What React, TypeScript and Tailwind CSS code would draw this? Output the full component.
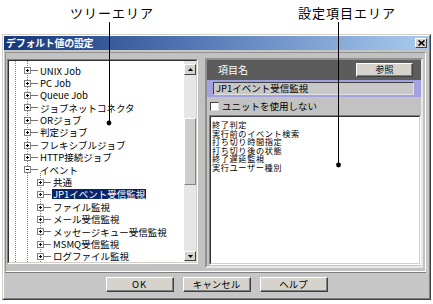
import React from "react";

const ROW = 12.4;
const TOP = 3.5;

type Item = { t: string; l: number; open?: boolean; sel?: boolean };
const items: Item[] = [
  { t: "UNIX Job", l: 1 },
  { t: "PC Job", l: 1 },
  { t: "Queue Job", l: 1 },
  { t: "ジョブネットコネクタ", l: 1 },
  { t: "ORジョブ", l: 1 },
  { t: "判定ジョブ", l: 1 },
  { t: "フレキシブルジョブ", l: 1 },
  { t: "HTTP接続ジョブ", l: 1 },
  { t: "イベント", l: 1, open: true },
  { t: "共通", l: 2 },
  { t: "JP1イベント受信監視", l: 2, sel: true },
  { t: "ファイル監視", l: 2 },
  { t: "メール受信監視", l: 2 },
  { t: "メッセージキュー受信監視", l: 2 },
  { t: "MSMQ受信監視", l: 2 },
  { t: "ログファイル監視", l: 2 },
];

const listItems = [
  "終了判定",
  "実行前のイベント検索",
  "打ち切り時間指定",
  "打ち切り後の状態",
  "終了遅延監視",
  "実行ユーザー種別",
];

function TreeLines() {
  const H = 201;
  const rowY = (i: number) => Math.floor(TOP + ROW * i + ROW / 2);
  const evIdx = 8;
  return (
    <svg className="absolute inset-0 pointer-events-none" width={175} height={H}>
      <line x1={6.5} y1={0} x2={6.5} y2={H} stroke="#808080" strokeDasharray="1 1" />
      <line x1={18.5} y1={0} x2={18.5} y2={H} stroke="#808080" strokeDasharray="1 1" />
      <line x1={31.5} y1={rowY(evIdx) + 4} x2={31.5} y2={H} stroke="#808080" strokeDasharray="1 1" />
      {items.map((it, i) => {
        const r = rowY(i);
        const cx = it.l === 1 ? 18 : 31;
        return (
          <g key={i}>
            <line x1={cx + 4} y1={r + 0.5} x2={cx + 11} y2={r + 0.5} stroke="#707070" />
            <rect x={cx - 2.5} y={r - 2.5} width={6} height={6} fill="#fff" stroke="#808080" />
            <line x1={cx - 1} y1={r + 0.5} x2={cx + 2} y2={r + 0.5} stroke="#000" />
            {!it.open && (
              <line x1={cx + 0.5} y1={r - 1} x2={cx + 0.5} y2={r + 2} stroke="#000" />
            )}
          </g>
        );
      })}
    </svg>
  );
}

function WinButton({ children, className = "" }: { children: React.ReactNode; className?: string }) {
  return (
    <div
      className={
        "flex items-center justify-center bg-[#d6d3cc] border border-t-white border-l-white border-r-[#404040] border-b-[#404040] shadow-[inset_-1px_-1px_0_#808080] " +
        className
      }
    >
      {children}
    </div>
  );
}

export default function App() {
  return (
    <div className="relative w-[433px] h-[304px] bg-white overflow-hidden font-['Noto_Sans_CJK_JP',sans-serif] text-black">
      {/* annotation labels */}
      <div className="flex h-[34px] items-start pt-[5px] text-[13px] leading-[16px] tracking-[1px]">
        <div className="ml-[70px] w-[228px]">ツリーエリア</div>
        <div>設定項目エリア</div>
      </div>

      {/* dialog */}
      <div className="ml-[2px] w-[429px] h-[266px] border border-t-[#d4d0c8] border-l-[#d4d0c8] border-r-[#404040] border-b-[#404040]">
        <div className="h-full flex flex-col border border-t-white border-l-white border-r-[#808080] border-b-[#808080] bg-[#c6c6c6]">
          {/* title bar */}
          <div className="h-[14px] flex items-center justify-between bg-gradient-to-r from-[#16377a] via-[#5d80bb] to-[#aacbef] pl-[2px] pr-[2px]">
            <span className="text-white font-bold text-[10px] leading-[14px] tracking-[-0.3px]">デフォルト値の設定</span>
            <div className="w-[12px] h-[10px] bg-[#d6d3cc] border border-t-white border-l-white border-r-[#404040] border-b-[#404040] flex items-center justify-center">
              <svg width="7" height="6" viewBox="0 0 7 6">
                <path d="M0.5 0.5 L6.5 5.5 M6.5 0.5 L0.5 5.5" stroke="#000" strokeWidth="1.6" />
              </svg>
            </div>
          </div>

          {/* main panel */}
          <div className="mt-[2px] ml-[1px] w-[421px] h-[220px] border border-t-[#909090] border-l-[#909090] border-r-white border-b-white shadow-[0_1px_0_#808080] bg-[#c2c2c2] flex">
            {/* tree box */}
            <div className="ml-[1px] mt-[6px] w-[191px] h-[205px] border border-t-[#808080] border-l-[#808080] border-r-white border-b-white">
              <div className="w-full h-full flex border border-t-[#303030] border-l-[#303030] border-r-[#d4d0c8] border-b-[#d4d0c8]">
                <div className="relative w-[175px] h-full bg-white overflow-hidden pt-[3.5px] text-[9.5px]">
                  <TreeLines />
                  {items.map((it, i) => (
                    <div
                      key={i}
                      className={"relative h-[12.4px] leading-[12.4px] whitespace-nowrap " + (it.l === 1 ? "pl-[31px]" : "pl-[43px]")}
                    >
                      {it.sel ? (
                        <span className="bg-[#0a246a] text-white px-[1px] inline-block leading-[10px]">{it.t}</span>
                      ) : (
                        <span className={it.l === 2 ? "pl-[1px]" : ""}>{it.t}</span>
                      )}
                    </div>
                  ))}
                </div>
                {/* scrollbar */}
                <div className="w-[12px] h-full flex flex-col bg-[#e6e6e6]">
                  <div className="h-[3px]" />
                  <div className="h-[11px] flex items-center justify-center bg-[#d6d3cc] border border-t-white border-l-white border-r-[#404040] border-b-[#404040]">
                    <svg width="5" height="3" viewBox="0 0 5 3"><path d="M2.5 0 L5 3 L0 3 Z" fill="#000" /></svg>
                  </div>
                  <div className="h-[43px]" />
                  <div className="h-[67px] bg-[#cfcccc] border border-t-white border-l-white border-r-[#808080] border-b-[#808080]" />
                  <div className="flex-1" />
                  <div className="h-[10px] mb-[1px] flex items-center justify-center bg-[#d6d3cc] border border-t-white border-l-white border-r-[#404040] border-b-[#404040]">
                    <svg width="5" height="3" viewBox="0 0 5 3"><path d="M0 0 L5 0 L2.5 3 Z" fill="#000" /></svg>
                  </div>
                </div>
              </div>
            </div>

            {/* right panel */}
            <div className="ml-[7px] mt-[5px] w-[218px] h-[210px] border-2 border-t-[#909090] border-l-[#909090] border-r-[#e8e8e8] border-b-[#e8e8e8] flex flex-col">
              <div className="h-[20px] bg-[#5c5c5c] flex items-center justify-between pl-[11px] pr-[8px]">
                <span className="text-white text-[10px] leading-[12px]">項目名</span>
                <WinButton className="w-[57px] h-[14px] text-[9px] leading-[10px]">参照</WinButton>
              </div>
              <div className="h-[17px] bg-[#a2a2e0] pl-[6px] pr-[7px] flex items-center">
                <div className="w-full h-[13px] bg-[#c8c8c8] border border-t-[#404040] border-l-[#404040] border-r-[#e0e0e0] border-b-[#e0e0e0] pl-[2px] text-[9.5px] leading-[11px] whitespace-nowrap">
                  JP1イベント受信監視
                </div>
              </div>
              <div className="h-[18px] flex items-center pl-[3px]">
                <div className="w-[9px] h-[9px] bg-white border border-t-[#404040] border-l-[#404040] border-r-[#e0e0e0] border-b-[#e0e0e0]" />
                <span className="ml-[3px] text-[9.5px] leading-[11px]">ユニットを使用しない</span>
              </div>
              <div className="flex-1 ml-[2px] mb-[1px] border border-t-[#808080] border-l-[#808080] border-r-white border-b-white">
                <div className="h-full bg-white border border-t-[#303030] border-l-[#303030] border-r-[#d4d0c8] border-b-[#d4d0c8] pt-[3px] pl-[1px] text-[8.2px] tracking-[0.6px] leading-[8.6px]">
                  {listItems.map((t) => (
                    <div key={t} className="h-[8.6px] leading-[8.6px] whitespace-nowrap overflow-visible">{t}</div>
                  ))}
                </div>
              </div>
            </div>
          </div>

          {/* buttons */}
          <div className="mt-[5px] flex justify-center gap-[9px] text-[9.5px] leading-[11px]">
            <WinButton className="w-[68px] h-[15px] tracking-[1px]">OK</WinButton>
            <WinButton className="w-[68px] h-[15px]">キャンセル</WinButton>
            <WinButton className="w-[68px] h-[15px]">ヘルプ</WinButton>
          </div>
        </div>
      </div>

      {/* annotation leader lines */}
      <svg className="absolute inset-0 pointer-events-none" width={433} height={304}>
        <line x1={109.5} y1={22} x2={109.5} y2={123} stroke="#000" strokeWidth={1} />
        <circle cx={109} cy={123} r={2.4} fill="#000" />
        <line x1={338.5} y1={22} x2={338.5} y2={165} stroke="#000" strokeWidth={1} />
        <circle cx={338.5} cy={165} r={2.4} fill="#000" />
      </svg>
    </div>
  );
}
